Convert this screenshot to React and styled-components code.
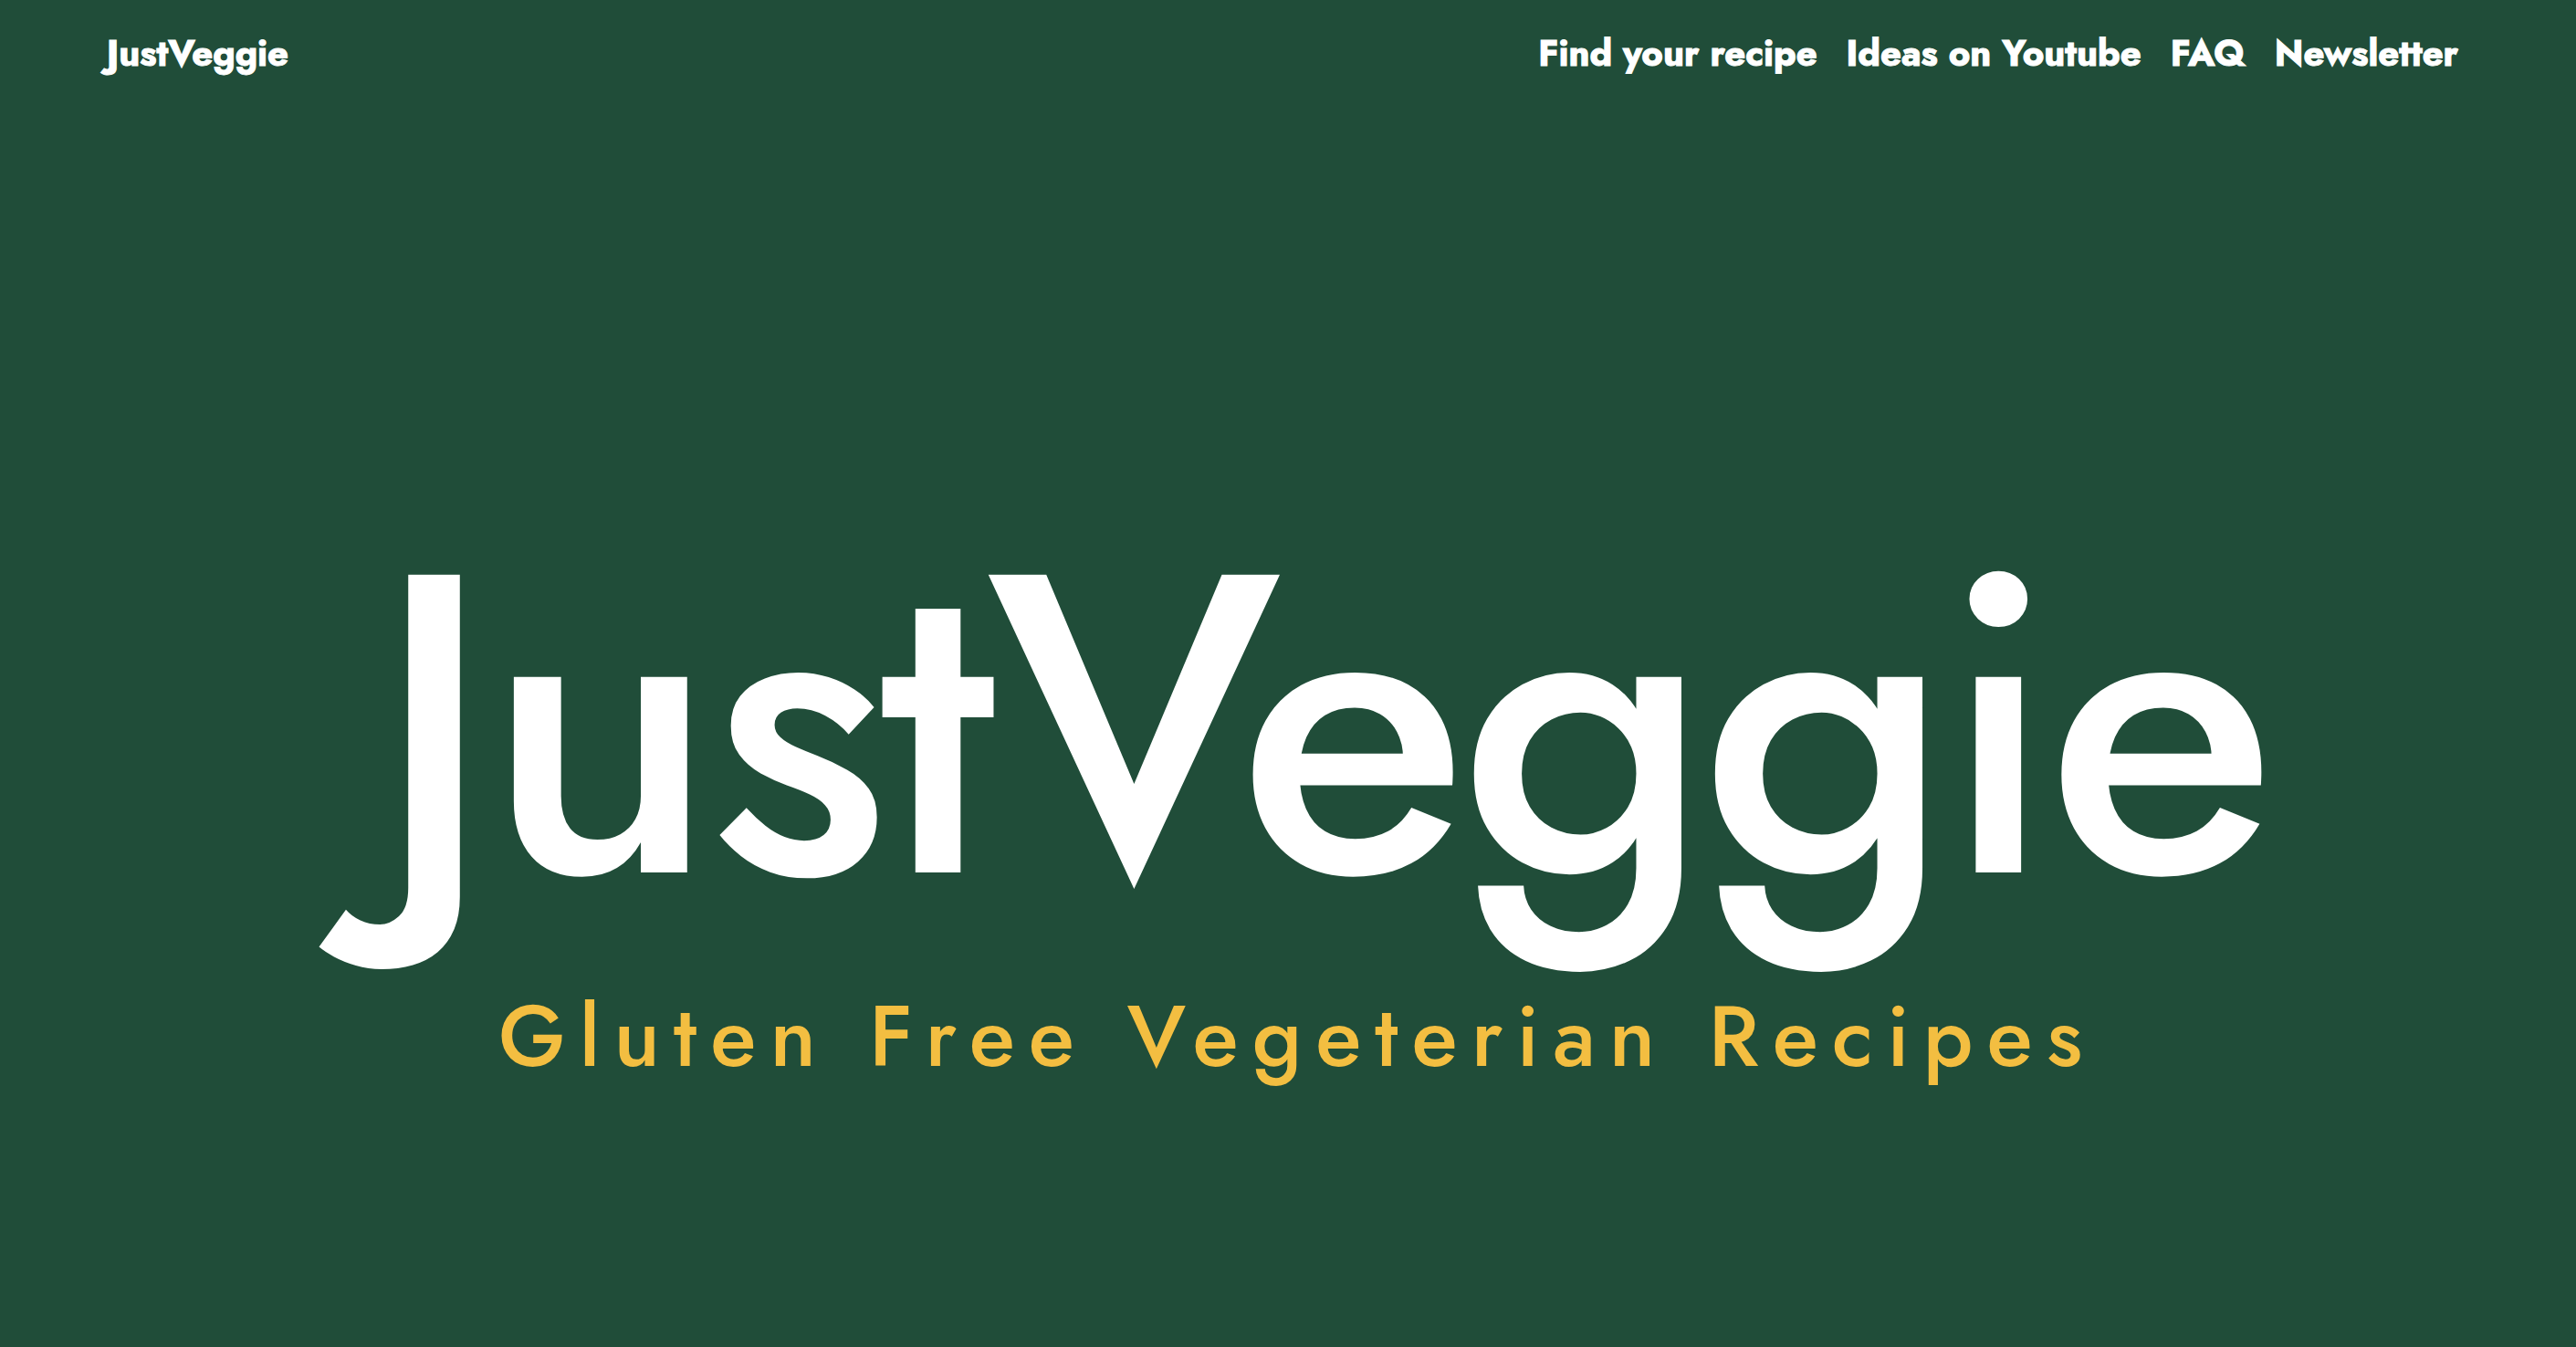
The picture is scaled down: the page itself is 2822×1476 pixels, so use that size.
import React from "react";
import styled, { createGlobalStyle } from "styled-components";

const GlobalStyle = createGlobalStyle`
  * { box-sizing: border-box; }
  body {
    margin: 0;
    background: #204d39;
    font-family: Jost, Lato, "Open Sans", sans-serif;
    color: #fff;
  }
`;

const Header = styled.header`
  display: flex;
  align-items: center;
  justify-content: space-between;
  height: 116px;
  padding: 0 129px 0 117px;
`;

const NavLink = styled.a`
  color: #fff;
  font-size: 40px;
  font-weight: 700;
  line-height: 58px;
  white-space: nowrap;
  text-decoration: none;
  -webkit-text-stroke: 1px #fff;
`;

const Nav = styled.nav`
  display: flex;
  gap: 32px;
`;

const Hero = styled.main`
  display: flex;
  flex-direction: column;
  align-items: center;
  justify-content: center;
  gap: 16px;
  min-height: calc(100vh - 116px);
  padding: 146px 0 0 20px;
`;

const Title = styled.h1`
  margin: 0;
  padding-left: 54px;
  font-size: 466px;
  font-weight: 500;
  line-height: 518px;
  letter-spacing: -9px;
  white-space: nowrap;
`;

const Tagline = styled.p`
  margin: 0;
  color: #f3be41;
  font-size: 93px;
  font-weight: 500;
  line-height: 134px;
  letter-spacing: 15px;
  white-space: nowrap;
`;

const links = ["Find your recipe", "Ideas on Youtube", "FAQ", "Newsletter"];

export default function App() {
  return (
    <>
      <GlobalStyle />
      <Header>
        <NavLink href="#top">JustVeggie</NavLink>
        <Nav>
          {links.map((text) => (
            <NavLink key={text} href="#top">{text}</NavLink>
          ))}
        </Nav>
      </Header>
      <Hero id="top">
        <Title>JustVeggie</Title>
        <Tagline>Gluten Free Vegeterian Recipes</Tagline>
      </Hero>
    </>
  );
}
